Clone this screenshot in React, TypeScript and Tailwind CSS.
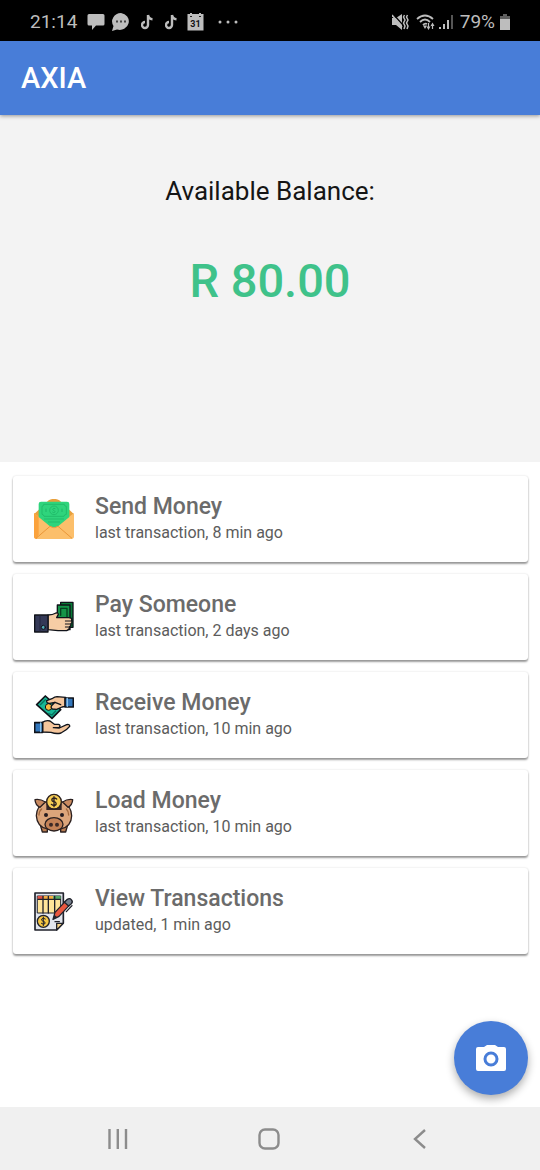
import type { ReactNode } from "react";

interface MenuItem {
  title: string;
  subtitle: string;
  icon: ReactNode;
}

function SendMoneyIcon() {
  return (
    <svg viewBox="0 0 120 120" className="size-10 shrink-0" aria-hidden="true">
      <path d="M0 46 L44 4 Q60 -5 76 4 L120 46 V80 H0Z" fill="#e8a03c" />
      <path d="M0 42 V112 Q0 120 8 120 H112 Q120 120 120 112 V42 L60 88Z" fill="#fcbf6b" />
      <path d="M0 42 L14 54 V106 L8 120 Q0 120 0 112Z" fill="#fba23c" />
      <path d="M14 15 Q14 8 21 8 H99 Q106 8 106 15 V54 L74 80 Q60 90 46 80 L14 54Z" fill="#2fd47c" />
      <path
        d="M24 22 Q29 22 29 16 H91 Q91 22 97 22 V46 Q91 46 90 52 H30 Q29 46 24 46Z M30 60 H90 M42 69 H78"
        fill="none"
        stroke="#1fb868"
        strokeWidth="2.5"
      />
      <circle cx="60" cy="34" r="13" fill="none" stroke="#1fb868" strokeWidth="2.5" />
      <path d="M64 29 Q57 26 56 31 Q57 34 61 35 Q65 37 62 40 Q59 42 55 39 M36 29 V39 M84 29 V39" fill="none" stroke="#1fb868" strokeWidth="3" />
      <path d="M6 118 L48 82 Q60 91 72 82 L114 118" fill="none" stroke="#e99639" strokeWidth="3" />
    </svg>
  );
}

function PaySomeoneIcon() {
  return (
    <svg viewBox="0 0 120 120" className="size-10 shrink-0" strokeLinejoin="round" strokeLinecap="round" aria-hidden="true">
      <path d="M80 16 H117 V91 H80Z" fill="#087a35" stroke="#10131a" strokeWidth="4" />
      <path d="M70 24 H108 V98 H70Z" fill="#159447" stroke="#10131a" strokeWidth="4" />
      <path d="M80 34 H99 V62 M80 34 V55" fill="none" stroke="#073f20" strokeWidth="4" />
      <path d="M42 54 Q56 54 66 48 Q72 46 73 52 L68 62 H104 Q115 62 113 70 Q116 76 111 80 Q112 87 107 89 Q107 97 98 101 H72 L42 98Z" fill="#f6cda5" stroke="#10131a" strokeWidth="4" />
      <path d="M94 72 H112 M94 81 H110 M94 90 H106" stroke="#10131a" strokeWidth="3" />
      <path d="M2 54 H42 V105 H2Z" fill="#343957" stroke="#10131a" strokeWidth="4" />
      <path d="M18 56 V103" stroke="#232741" strokeWidth="3" />
      <circle cx="28" cy="91" r="6" fill="#54aab8" stroke="#10131a" strokeWidth="3" />
    </svg>
  );
}

function ReceiveMoneyIcon() {
  return (
    <svg viewBox="0 0 120 120" className="size-10 shrink-0" strokeLinejoin="round" strokeLinecap="round" aria-hidden="true">
      <path d="M8 29 L34 3 L80 44 L54 70Z" fill="#18b796" stroke="#10131a" strokeWidth="5" />
      <path d="M19 29 L34 14 M44 56 L54 60 L65 48" fill="none" stroke="#08745f" strokeWidth="4" />
      <circle cx="44" cy="36" r="10" fill="#f9bc42" stroke="#10131a" strokeWidth="3" />
      <path d="M95 7 L69 5 Q62 5 56 10 L38 17 Q37 25 47 25 L63 22 L54 31 Q48 37 55 42 L68 43 L84 36 L95 34Z" fill="#f5c69c" stroke="#10131a" strokeWidth="4" />
      <path d="M63 22 L80 29" stroke="#10131a" strokeWidth="4" />
      <path d="M93 9 H118 V36 H93Z" fill="#3276bb" stroke="#10131a" strokeWidth="5" />
      <path d="M100 10 V34" stroke="#8bc2eb" strokeWidth="4" />
      <path d="M25 82 Q36 75 48 78 L61 88 H73 Q81 90 76 97 L58 98 L76 99 L98 89 Q108 87 107 94 Q99 105 81 114 Q67 118 51 112 L25 111Z" fill="#f5c69c" stroke="#10131a" strokeWidth="4" />
      <path d="M2 83 H26 V112 H2Z" fill="#3276bb" stroke="#10131a" strokeWidth="5" />
      <path d="M20 84 V110" stroke="#8bc2eb" strokeWidth="4" />
    </svg>
  );
}

function LoadMoneyIcon() {
  return (
    <svg viewBox="0 0 120 120" className="size-10 shrink-0" strokeLinejoin="round" strokeLinecap="round" aria-hidden="true">
      <path d="M19 96 H40 V117 H25Z M80 96 H101 L95 117 H80Z" fill="#b97d52" stroke="#2b2020" strokeWidth="4" />
      <path d="M34 27 Q60 17 86 27 Q112 39 113 68 Q112 100 82 107 Q60 112 38 107 Q9 100 7 68 Q8 39 34 27Z" fill="#dba57b" stroke="#2b2020" strokeWidth="4" />
      <path d="M34 27 Q18 17 3 20 Q4 36 18 43Z M86 27 Q101 17 116 20 Q115 36 102 43Z" fill="#c98a60" stroke="#2b2020" strokeWidth="4" />
      <path d="M37 27 H83 V51 H37Z" fill="#352525" />
      <circle cx="60" cy="26" r="22" fill="#f7ce55" stroke="#2b2020" strokeWidth="4" />
      <path d="M68 18 Q60 12 54 18 Q52 25 60 26 Q68 28 66 35 Q59 40 52 34 M60 11 V41" fill="none" stroke="#2b2020" strokeWidth="4" />
      <circle cx="36" cy="66" r="6" fill="#241c20" />
      <circle cx="84" cy="66" r="6" fill="#241c20" />
      <ellipse cx="60" cy="94" rx="27" ry="20" fill="#c48257" stroke="#2b2020" strokeWidth="4" />
      <circle cx="51" cy="95" r="6" fill="#3c2926" />
      <circle cx="69" cy="95" r="6" fill="#3c2926" />
      <path d="M15 66 Q16 53 23 48 M104 66 Q103 53 97 48" fill="none" stroke="#a3683d" strokeWidth="4" />
    </svg>
  );
}

function ViewTransactionsIcon() {
  return (
    <svg viewBox="0 0 120 120" className="size-10 shrink-0" strokeLinejoin="round" strokeLinecap="round" aria-hidden="true">
      <path d="M3 6 H88 V96 L68 117 H3Z" fill="#e2e6ee" stroke="#20222b" strokeWidth="5" />
      <path d="M11 15 H80 V66 H11Z" fill="#ffe59a" stroke="#20222b" strokeWidth="3" />
      <path d="M11 15 H29 V24 H11Z" fill="#df5145" />
      <path d="M29 15 H57 V24 H29Z" fill="#f3ad42" />
      <path d="M57 15 H80 V24 H57Z" fill="#55a966" />
      <path d="M27 16 V66 M43 16 V66 M62 16 V66 M12 25 H79" stroke="#20222b" strokeWidth="4" />
      <circle cx="28" cy="91" r="18" fill="#f6c744" stroke="#20222b" strokeWidth="4" />
      <path d="M34 84 Q28 79 23 84 Q22 90 28 91 Q35 92 33 98 Q28 102 22 97 M28 78 V104" fill="none" stroke="#20222b" strokeWidth="3" />
      <path d="M68 117 V97 H88Z" fill="#f6d389" stroke="#20222b" strokeWidth="4" />
      <path d="M57 85 L63 64 L94 31 L106 43 L75 76Z" fill="#e9573f" stroke="#20222b" strokeWidth="4" />
      <path d="M91 34 L100 25 Q107 20 112 26 Q118 32 112 38 L104 45Z" fill="#77818f" stroke="#20222b" strokeWidth="4" />
      <path d="M57 85 L61 71 L70 79Z" fill="#20222b" />
      <path d="M114 44 L97 62 M63 92 H76" fill="none" stroke="#20222b" strokeWidth="4" />
    </svg>
  );
}

const MENU_ITEMS: MenuItem[] = [
  { title: "Send Money", subtitle: "last transaction, 8 min ago", icon: <SendMoneyIcon /> },
  { title: "Pay Someone", subtitle: "last transaction, 2 days ago", icon: <PaySomeoneIcon /> },
  { title: "Receive Money", subtitle: "last transaction, 10 min ago", icon: <ReceiveMoneyIcon /> },
  { title: "Load Money", subtitle: "last transaction, 10 min ago", icon: <LoadMoneyIcon /> },
  { title: "View Transactions", subtitle: "updated, 1 min ago", icon: <ViewTransactionsIcon /> },
];

function NoteIcon() {
  return (
    <svg viewBox="0 0 12 16" className="h-4 w-3" fill="none" stroke="currentColor" strokeWidth="2.4" aria-hidden="true">
      <path d="M7 1 V11 A3 3 0 1 1 4 8 M7 1 Q7.5 5 11.5 5.2" />
    </svg>
  );
}

function StatusBar() {
  return (
    <div className="flex h-[41px] items-center justify-between bg-black pt-0.5 pr-[29px] pl-[30px] text-[#bdbdbd]">
      <div className="flex items-center">
        <span className="text-[19px] leading-6">21:14</span>
        <svg viewBox="0 0 18 18" className="ml-2.5 size-[18px]" fill="currentColor" aria-hidden="true">
          <path d="M2 1 H16 Q17.5 1 17.5 2.5 V11 Q17.5 12.5 16 12.5 H9 L5 17 V12.5 H2 Q0.5 12.5 0.5 11 V2.5 Q0.5 1 2 1Z" />
        </svg>
        <svg viewBox="0 0 20 20" className="ml-1.5 size-5" aria-hidden="true">
          <path d="M10 1 A9 8.5 0 1 1 6 17.5 L1 19 L2.5 14 A9 8.5 0 0 1 10 1Z" fill="currentColor" />
          <path d="M5 8.500 H7 V10.500 H5Z M9 8.500 H11 V10.500 H9Z M13 8.500 H15 V10.500 H13Z" fill="#444444" />
        </svg>
        <div className="ml-2.5 flex gap-3">
          <NoteIcon />
          <NoteIcon />
        </div>
        <svg viewBox="0 0 17 18" className="ml-2.5 h-[18px] w-[17px]" aria-hidden="true">
          <path d="M0.500 1 H3 V0 H5 V1 H12 V0 H14 V1 H16.500 V17.500 H0.500Z" fill="currentColor" />
          <path d="M3 3.500 H5 M12 3.500 H14" stroke="#222222" />
          <text x="8.5" y="14" textAnchor="middle" fontSize="9" fontWeight="700" fill="#111111">
            31
          </text>
        </svg>
        <svg viewBox="0 0 20 4" className="ml-3.5 h-1 w-5" fill="currentColor" aria-hidden="true">
          <circle cx="2" cy="2" r="1.5" />
          <circle cx="10" cy="2" r="1.5" />
          <circle cx="18" cy="2" r="1.5" />
        </svg>
      </div>
      <div className="flex items-center">
        <svg viewBox="0 0 18 18" className="size-[18px]" fill="none" stroke="currentColor" aria-hidden="true">
          <path d="M0 5 H4 L10 1 V17 L4 12 H0Z" fill="currentColor" stroke="none" />
          <path d="M1 1 L11 12" stroke="#000000" strokeWidth="1.2" />
          <path d="M0 2 L10 14" strokeWidth="1.5" />
          <path d="M12.500 2 L11.500 4 L13 7 L11.500 10 L13 13 L12 16 M15.500 2 L14.500 4 L16 7 L14.500 10 L16 13 L15 16" strokeWidth="1.5" />
        </svg>
        <svg viewBox="0 0 20 18" className="ml-1.5 h-[18px] w-5" fill="none" stroke="currentColor" strokeWidth="1.8" aria-hidden="true">
          <path d="M1 6 Q9 -1 17 6 M4 9 Q9 4 14 9 M7 12 Q9 10 11 11" />
          <path d="M7 12.500 H11 L9 16Z M10.500 13.500 H14.500 L12.500 17Z M14.500 13 L16.500 9.500 L18.500 13Z" fill="currentColor" stroke="none" />
          <path d="M12.500 10 V14 M16.500 12 V16" strokeWidth="1.2" />
        </svg>
        <svg viewBox="0 0 15 16" className="ml-[3px] h-4 w-[15px]" fill="currentColor" aria-hidden="true">
          <path d="M0 13 H2 V15 H0Z M4 10 H6 V15 H4Z M8 6 H10 V15 H8Z" />
          <path d="M12 1 H14 V15 H12Z" opacity="0.45" />
        </svg>
        <span className="ml-1.5 text-[19px] leading-6">79%</span>
        <svg viewBox="0 0 12 16" className="ml-1 h-4 w-3" fill="currentColor" aria-hidden="true">
          <path d="M4 0 H8 V2 H11 V5 H1 V2 H4Z" opacity="0.5" />
          <path d="M1 5 H11 V16 H1Z" />
        </svg>
      </div>
    </div>
  );
}

function MenuCard({ item }: { item: MenuItem }) {
  return (
    <button
      type="button"
      className="flex h-[86px] w-full items-center gap-[21px] rounded-[3px] bg-white px-[21px] text-left shadow-[0_2px_2px_rgba(0,0,0,0.38),0_0_2px_rgba(0,0,0,0.16)]"
    >
      {item.icon}
      <span className="flex flex-col">
        <span className="text-[23px] leading-7 font-medium text-[#6b6b6b]">{item.title}</span>
        <span className="text-base leading-6 text-[#5c5c5c]">{item.subtitle}</span>
      </span>
    </button>
  );
}

function NavBar() {
  return (
    <nav className="grid h-[63px] grid-cols-3 bg-[#f0f0f0] pr-11 pl-[42px] text-[#8c8c8c]">
      <button type="button" aria-label="Recent apps" className="flex items-center justify-center">
        <svg viewBox="0 0 22 22" className="size-[22px]" stroke="currentColor" strokeWidth="2.4" aria-hidden="true">
          <path d="M2.5 1 V21 M10.8 1 V21 M19 1 V21" />
        </svg>
      </button>
      <button type="button" aria-label="Home" className="flex items-center justify-center">
        <svg viewBox="0 0 22 22" className="size-[22px]" fill="none" stroke="currentColor" strokeWidth="2.4" aria-hidden="true">
          <rect x="1.5" y="1.5" width="19" height="19" rx="5.5" />
        </svg>
      </button>
      <button type="button" aria-label="Back" className="flex items-center justify-center">
        <svg viewBox="0 0 22 22" className="size-[22px]" fill="none" stroke="currentColor" strokeWidth="2.4" aria-hidden="true">
          <path d="M16 2 L6 11 L16 20" />
        </svg>
      </button>
    </nav>
  );
}

export default function App() {
  return (
    <div className="flex min-h-screen flex-col bg-white font-['Roboto',sans-serif]">
      <StatusBar />
      <header className="relative flex h-[74px] items-center bg-[#487dd8] px-[21px] shadow-[0_1px_4px_rgba(0,0,0,0.4)]">
        <h1 className="text-[29px] leading-8 font-medium text-white">AXIA</h1>
      </header>
      <main className="flex grow flex-col">
        <section className="flex flex-col items-center gap-[46px] bg-[#f3f3f3] pt-[60px] pb-[153px]">
          <h2 className="text-[26px] leading-8 text-[#151515]">Available Balance:</h2>
          <p className="text-[47px] leading-14 font-medium text-[#3fc28a]">R 80.00</p>
        </section>
        <ul className="flex flex-col gap-3 pt-3.5 pr-3 pl-[13px]">
          {MENU_ITEMS.map((item) => (
            <li key={item.title}>
              <MenuCard item={item} />
            </li>
          ))}
        </ul>
        <button
          type="button"
          aria-label="Scan with camera"
          className="mt-auto mr-3 mb-3 flex size-[74px] items-center justify-center self-end rounded-full bg-[#487dd8] text-white shadow-[0_4px_8px_rgba(0,0,0,0.32)]"
        >
          <svg viewBox="0 0 32 28" className="h-7 w-8" aria-hidden="true">
            <path d="M3 3 H9 L12 1 H20 L23 3 H29 Q31 3 31 5 V25 Q31 27 29 27 H3 Q1 27 1 25 V5 Q1 3 3 3Z" fill="currentColor" />
            <circle cx="16" cy="15" r="6" fill="currentColor" stroke="#487dd8" strokeWidth="3" />
          </svg>
        </button>
      </main>
      <NavBar />
    </div>
  );
}
